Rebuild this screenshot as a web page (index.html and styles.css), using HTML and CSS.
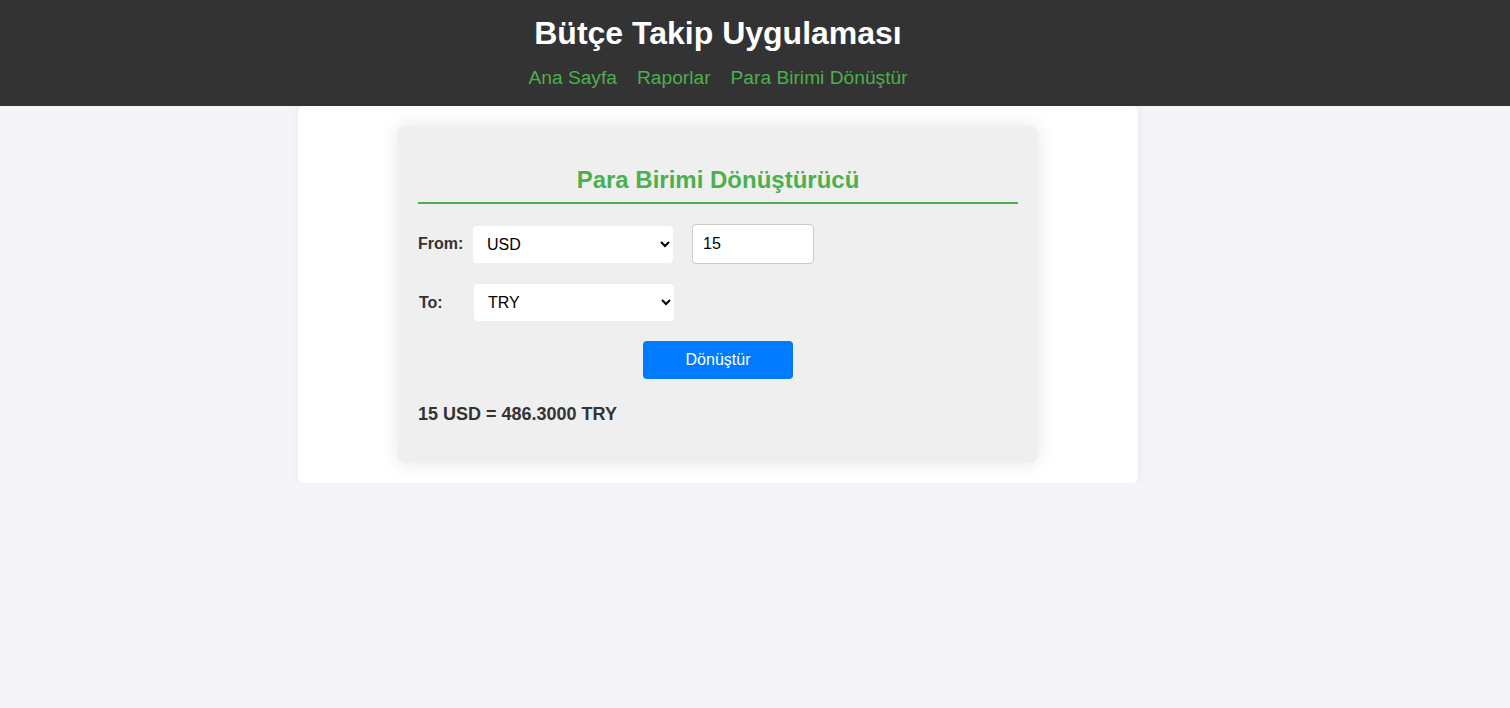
FILE: index.html
```html
<!DOCTYPE html>
<html lang="tr">
<head>
<meta charset="utf-8">
<title>Bütçe Takip Uygulaması</title>
<link rel="stylesheet" href="styles.css">
</head>
<body>
<header class="site-header">
  <div class="header-inner">
    <h1 class="site-title">Bütçe Takip Uygulaması</h1>
    <nav class="nav">
      <a href="#" class="nav-link">Ana Sayfa</a>
      <a href="#" class="nav-link">Raporlar</a>
      <a href="#" class="nav-link">Para Birimi Dönüştür</a>
    </nav>
  </div>
</header>
<main class="main">
  <div class="container">
    <div class="converter">
      <h2 class="converter-title">Para Birimi Dönüştürücü</h2>
      <div class="row">
        <label class="row-label">From:</label>
        <select class="currency">
          <option selected>USD</option>
          <option>EUR</option>
          <option>TRY</option>
        </select>
        <input class="amount" type="text" value="15">
      </div>
      <div class="row">
        <label class="row-label row-label-to">To:</label>
        <select class="currency">
          <option>USD</option>
          <option>EUR</option>
          <option selected>TRY</option>
        </select>
      </div>
      <div class="actions">
        <button class="convert-btn" type="button">Dönüştür</button>
      </div>
      <p class="result">15 USD = 486.3000 TRY</p>
    </div>
  </div>
</main>
</body>
</html>
```
FILE: styles.css
```css
* { box-sizing: border-box; }

body {
  margin: 0;
  background: #f4f4f9;
  font-family: "Liberation Sans", Arial, sans-serif;
  color: #333;
}

.site-header {
  background: #333;
  height: 106px;
  padding-top: 15px;
}

.header-inner {
  margin-right: 74px;
  text-align: center;
}

.site-title {
  margin: 0 0 15px;
  font-size: 32px;
  font-weight: bold;
  color: #fff;
  line-height: 37px;
}

.nav {
  display: flex;
  justify-content: center;
  gap: 20px;
}

.nav-link {
  color: #4caf50;
  text-decoration: none;
  font-size: 19.2px;
  line-height: 22px;
}

.main {
  margin-right: 74px;
}

.container {
  width: 840px;
  margin: 0 auto;
  background: #fff;
  border-radius: 6px;
  padding: 20px 100px;
  box-shadow: 0 0 10px rgba(0, 0, 0, 0.06);
}

.converter {
  background: #efefef;
  border-radius: 8px;
  padding: 20px;
  box-shadow: 0 0 20px rgba(0, 0, 0, 0.1);
}

.converter-title {
  margin: 20px 0;
  padding-bottom: 8px;
  border-bottom: 2px solid #4caf50;
  color: #4caf50;
  font-size: 24px;
  line-height: 28px;
  text-align: center;
}

.row {
  display: flex;
  align-items: center;
  margin-bottom: 20px;
}

.row-label {
  width: 55px;
  font-weight: bold;
  font-size: 16px;
  color: #333;
}

.row-label-to {
  width: 56px;
  padding-left: 1px;
}

.currency {
  width: 200px;
  height: 37px;
  border: none;
  border-radius: 4px;
  background: #fff;
  font-family: "Liberation Sans", Arial, sans-serif;
  font-size: 16px;
  color: #000;
  padding: 0 6px 0 10px;
}

.amount {
  margin-left: 19px;
  width: 122px;
  height: 40px;
  border: 1px solid #ccc;
  border-radius: 4px;
  padding: 0 10px;
  font-family: "Liberation Sans", Arial, sans-serif;
  font-size: 16px;
  color: #000;
  background: #fff;
}

.actions {
  display: flex;
  justify-content: center;
}

.convert-btn {
  width: 150px;
  height: 38px;
  border: none;
  border-radius: 4px;
  background: #007bff;
  color: #fff;
  font-family: "Liberation Sans", Arial, sans-serif;
  font-size: 16px;
}

.result {
  margin: 25px 0 18px;
  font-weight: bold;
  font-size: 18px;
  line-height: 21px;
  color: #333;
}
```
